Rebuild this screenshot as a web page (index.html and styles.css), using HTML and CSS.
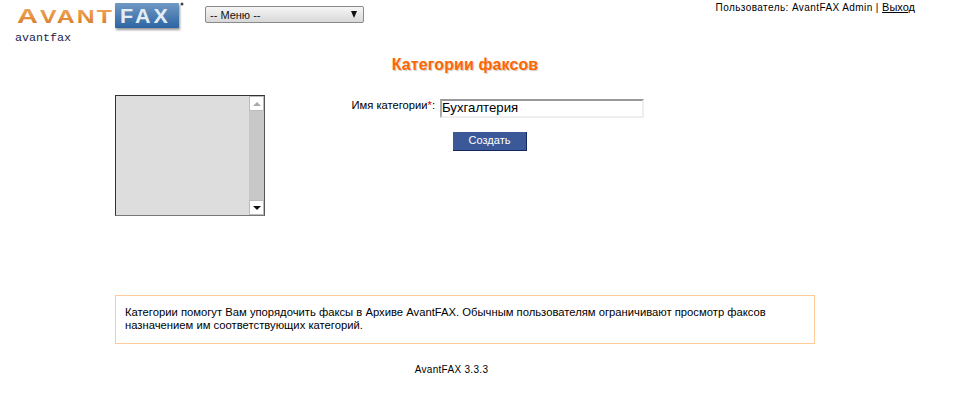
FILE: index.html
```html
<!DOCTYPE html>
<html lang="ru">
<head>
<meta charset="utf-8">
<title>Категории факсов</title>
<link rel="stylesheet" href="styles.css">
</head>
<body>
<header class="top">
  <div class="brand">
    <svg class="logo" width="172" height="32" viewBox="0 0 172 32" xmlns="http://www.w3.org/2000/svg">
      <defs>
        <linearGradient id="org" x1="0" y1="0" x2="0" y2="1">
          <stop offset="0" stop-color="#eeb06c"/>
          <stop offset="0.55" stop-color="#e8923f"/>
          <stop offset="1" stop-color="#c9762c"/>
        </linearGradient>
        <linearGradient id="blu" x1="0" y1="0" x2="0" y2="1">
          <stop offset="0" stop-color="#7199c4"/>
          <stop offset="1" stop-color="#2c64a2"/>
        </linearGradient>
        <filter id="soft" x="-10%" y="-20%" width="120%" height="150%">
          <feGaussianBlur stdDeviation="1.2"/>
        </filter>
      </defs>
      <rect x="101" y="5" width="64" height="25" fill="#999" filter="url(#soft)"/>
      <rect x="100" y="3" width="64" height="25" rx="1" fill="url(#blu)"/>
      <text x="2" y="23" class="logo-a" fill="url(#org)" textLength="97" lengthAdjust="spacingAndGlyphs"><tspan class="logo-cap">A</tspan>VANT</text>
      <text x="105" y="23" class="logo-f" fill="#e4ecf4" textLength="51" lengthAdjust="spacingAndGlyphs">FAX</text>
      <circle cx="167" cy="4" r="1.5" fill="#444"/>
    </svg>
    <div class="host">avantfax</div>
  </div>
  <div class="menu"><span>-- Меню --</span><span class="menu-arrow"></span></div>
  <div class="user">Пользователь: AvantFAX Admin | <a href="#">Выход</a></div>
</header>
<main class="page">
  <h1 class="title">Категории факсов</h1>
  <div class="editor">
    <div class="list">
      <div class="list-body"></div>
      <div class="scroll">
        <div class="scroll-btn"><span class="tri-up"></span></div>
        <div class="scroll-track"></div>
        <div class="scroll-btn"><span class="tri-down"></span></div>
      </div>
    </div>
    <form class="form">
      <div class="field">
        <label class="label" for="cat">Имя категории<span class="req">*</span>:</label>
        <input class="input" id="cat" type="text" value="Бухгалтерия">
      </div>
      <button class="btn" type="button">Создать</button>
    </form>
  </div>
  <div class="note">Категории помогут Вам упорядочить факсы в Архиве AvantFAX. Обычным пользователям ограничивают просмотр факсов назначением им соответствующих категорий.</div>
  <footer class="foot">AvantFAX 3.3.3</footer>
</main>
</body>
</html>
```

FILE: styles.css
```css
* { box-sizing: border-box; }
html, body { margin: 0; padding: 0; background: #fff; }
body { font-family: "Liberation Sans", Arial, sans-serif; font-size: 11px; color: #000; width: 956px; height: 419px; overflow: hidden; }

.top { display: flex; align-items: flex-start; height: 50px; }
.brand { width: 205px; padding-left: 15px; }
.logo { display: block; margin-bottom: -1px; }
.logo-a { font-family: "Liberation Sans", sans-serif; font-size: 18px; font-weight: bold; letter-spacing: 1.5px; }
.logo-cap { font-size: 21px; }
.logo-f { font-family: "Liberation Sans", sans-serif; font-size: 21px; font-weight: bold; letter-spacing: 3px; }
.host { font-family: "Liberation Mono", monospace; font-size: 11.7px; line-height: 14px; color: #1a1a4e; }

.menu { width: 159px; height: 17px; margin-top: 6px; padding: 0 6px 0 4px; display: flex; justify-content: space-between; align-items: center; border: 1px solid #8a8a8a; border-radius: 2px; background: linear-gradient(#f6f6f6, #d8d8d8); font-size: 11px; color: #111; }
.menu-arrow { width: 0; height: 0; border-left: 3.5px solid transparent; border-right: 3.5px solid transparent; border-top: 7px solid #111; }

.user { margin-left: auto; margin-right: 41px; margin-top: 1px; font-size: 10px; line-height: 13px; letter-spacing: 0.42px; }
.user a { color: #000; font-size: 11px; letter-spacing: 0; }

.page { width: 700px; margin-left: 115px; }
.title { margin: 6px 0 0; height: 39px; line-height: 18px; text-align: center; font-size: 16px; font-weight: bold; letter-spacing: 0.1px; color: #f60; text-shadow: 1px 1px 1px #ccc; }

.editor { display: flex; height: 200px; }
.list { width: 150px; height: 121px; display: flex; border: 1px solid #333; border-right-color: #555; border-bottom-color: #777; background: #ddd; }
.list-body { flex: 1; }
.scroll { width: 15px; display: flex; flex-direction: column; background: #c8c8c8; }
.scroll-btn { height: 15px; display: flex; align-items: center; justify-content: center; background: #fff; border: 1px solid #bbb; }
.scroll-track { flex: 1; }
.tri-up { width: 0; height: 0; border-left: 4px solid transparent; border-right: 4px solid transparent; border-bottom: 4px solid #aaa; }
.tri-down { width: 0; height: 0; border-left: 4px solid transparent; border-right: 4px solid transparent; border-top: 4px solid #111; }

.form { width: 380px; margin-left: 70px; padding-top: 4px; }
.field { display: flex; align-items: flex-start; }
.label { width: 105px; padding-right: 5px; text-align: right; line-height: 13px; font-size: 11.2px; white-space: nowrap; }
.req { color: #c00; }
.input { width: 204px; height: 19px; padding: 0 0 2px 0; border: 2px solid #eee; border-top-color: #999; border-left-color: #aaa; background: #fff; font-family: "Liberation Sans", Arial, sans-serif; font-size: 13.2px; color: #000; outline: none; }
.btn { display: block; width: 74px; height: 19px; margin: 14px 0 0 118px; padding: 0 0 2px; border: 0; border-bottom: 1px solid #14285e; border-right: 1px solid #14285e; background: #3b5998; color: #fff; font-family: "Liberation Sans", Arial, sans-serif; font-size: 11px; cursor: pointer; }

.note { width: 700px; height: 49px; padding: 10px 9px; border: 1px solid #fc9; font-size: 11.26px; line-height: 13px; }
.foot { margin-top: 19px; padding-right: 27px; text-align: center; font-size: 10px; line-height: 13px; letter-spacing: 0.3px; }
```
